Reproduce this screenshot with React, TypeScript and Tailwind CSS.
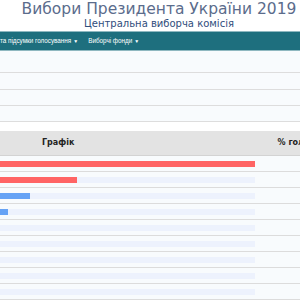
import React from 'react';

const bars = [
  { w: 255, color: 'bg-[#ff6464]' },
  { w: 77, color: 'bg-[#ff6464]' },
  { w: 30, color: 'bg-[#66a3f5]' },
  { w: 8, color: 'bg-[#66a3f5]' },
  { w: 0, color: '' },
  { w: 0, color: '' },
  { w: 0, color: '' },
  { w: 0, color: '' },
  { w: 0, color: '' },
];

const Caret = () => <span className="ml-[2px] text-[5px] align-middle">▼</span>;

export default function App() {
  return (
    <div className="w-[300px] h-[300px] overflow-hidden bg-[#f8fbfd] font-['DejaVu_Sans',sans-serif]">
      {/* header */}
      <div className="h-[31px] bg-white">
        <div className="w-[318px] text-center">
          <div className="text-[15.5px] leading-[18px] text-[#5b6c8c] whitespace-nowrap">Вибори Президента України 2019</div>
          <div className="text-[10px] leading-[11px] text-[#2f4d7c] whitespace-nowrap">Центральна виборча комісія</div>
        </div>
      </div>

      {/* nav */}
      <div className="h-[20px] border-t border-b border-[#8fb8c0] bg-[#1e6f7e] flex items-center">
        <div className="flex gap-[10px] -ml-[34px] text-[6.3px] text-white whitespace-nowrap font-['Liberation_Sans',sans-serif]">
          <span>Результати та підсумки голосування<Caret /></span>
          <span>Виборчі фонди<Caret /></span>
        </div>
      </div>

      {/* empty rows */}
      <div className="h-[22px] border-b border-[#dddddd]" />
      <div className="h-[17px] border-b border-[#dddddd]" />
      <div className="h-[16px] border-b border-[#dddddd]" />
      <div className="h-[16px] border-b border-[#dddddd]" />
      <div className="h-[9px] bg-white" />

      {/* table header */}
      <div className="h-[25px] bg-[#e3e3e3] border-b border-[#d3d3d3] flex items-center text-[8px] font-bold text-[#222] whitespace-nowrap">
        <span className="ml-[42px]">Графік</span>
        <span className="ml-auto -mr-[22px]">% голосів</span>
      </div>

      {/* rows */}
      {bars.map((b, i) => (
        <div key={i} className="h-[16px] border-b border-[#dcdcdc] pt-[5px]">
          <div className="w-[255px] h-[6px] bg-[#edf2fd] flex">
            {b.w > 0 && <div className={`h-full ${b.color}`} style={{ width: b.w }} />}
          </div>
        </div>
      ))}
    </div>
  );
}
